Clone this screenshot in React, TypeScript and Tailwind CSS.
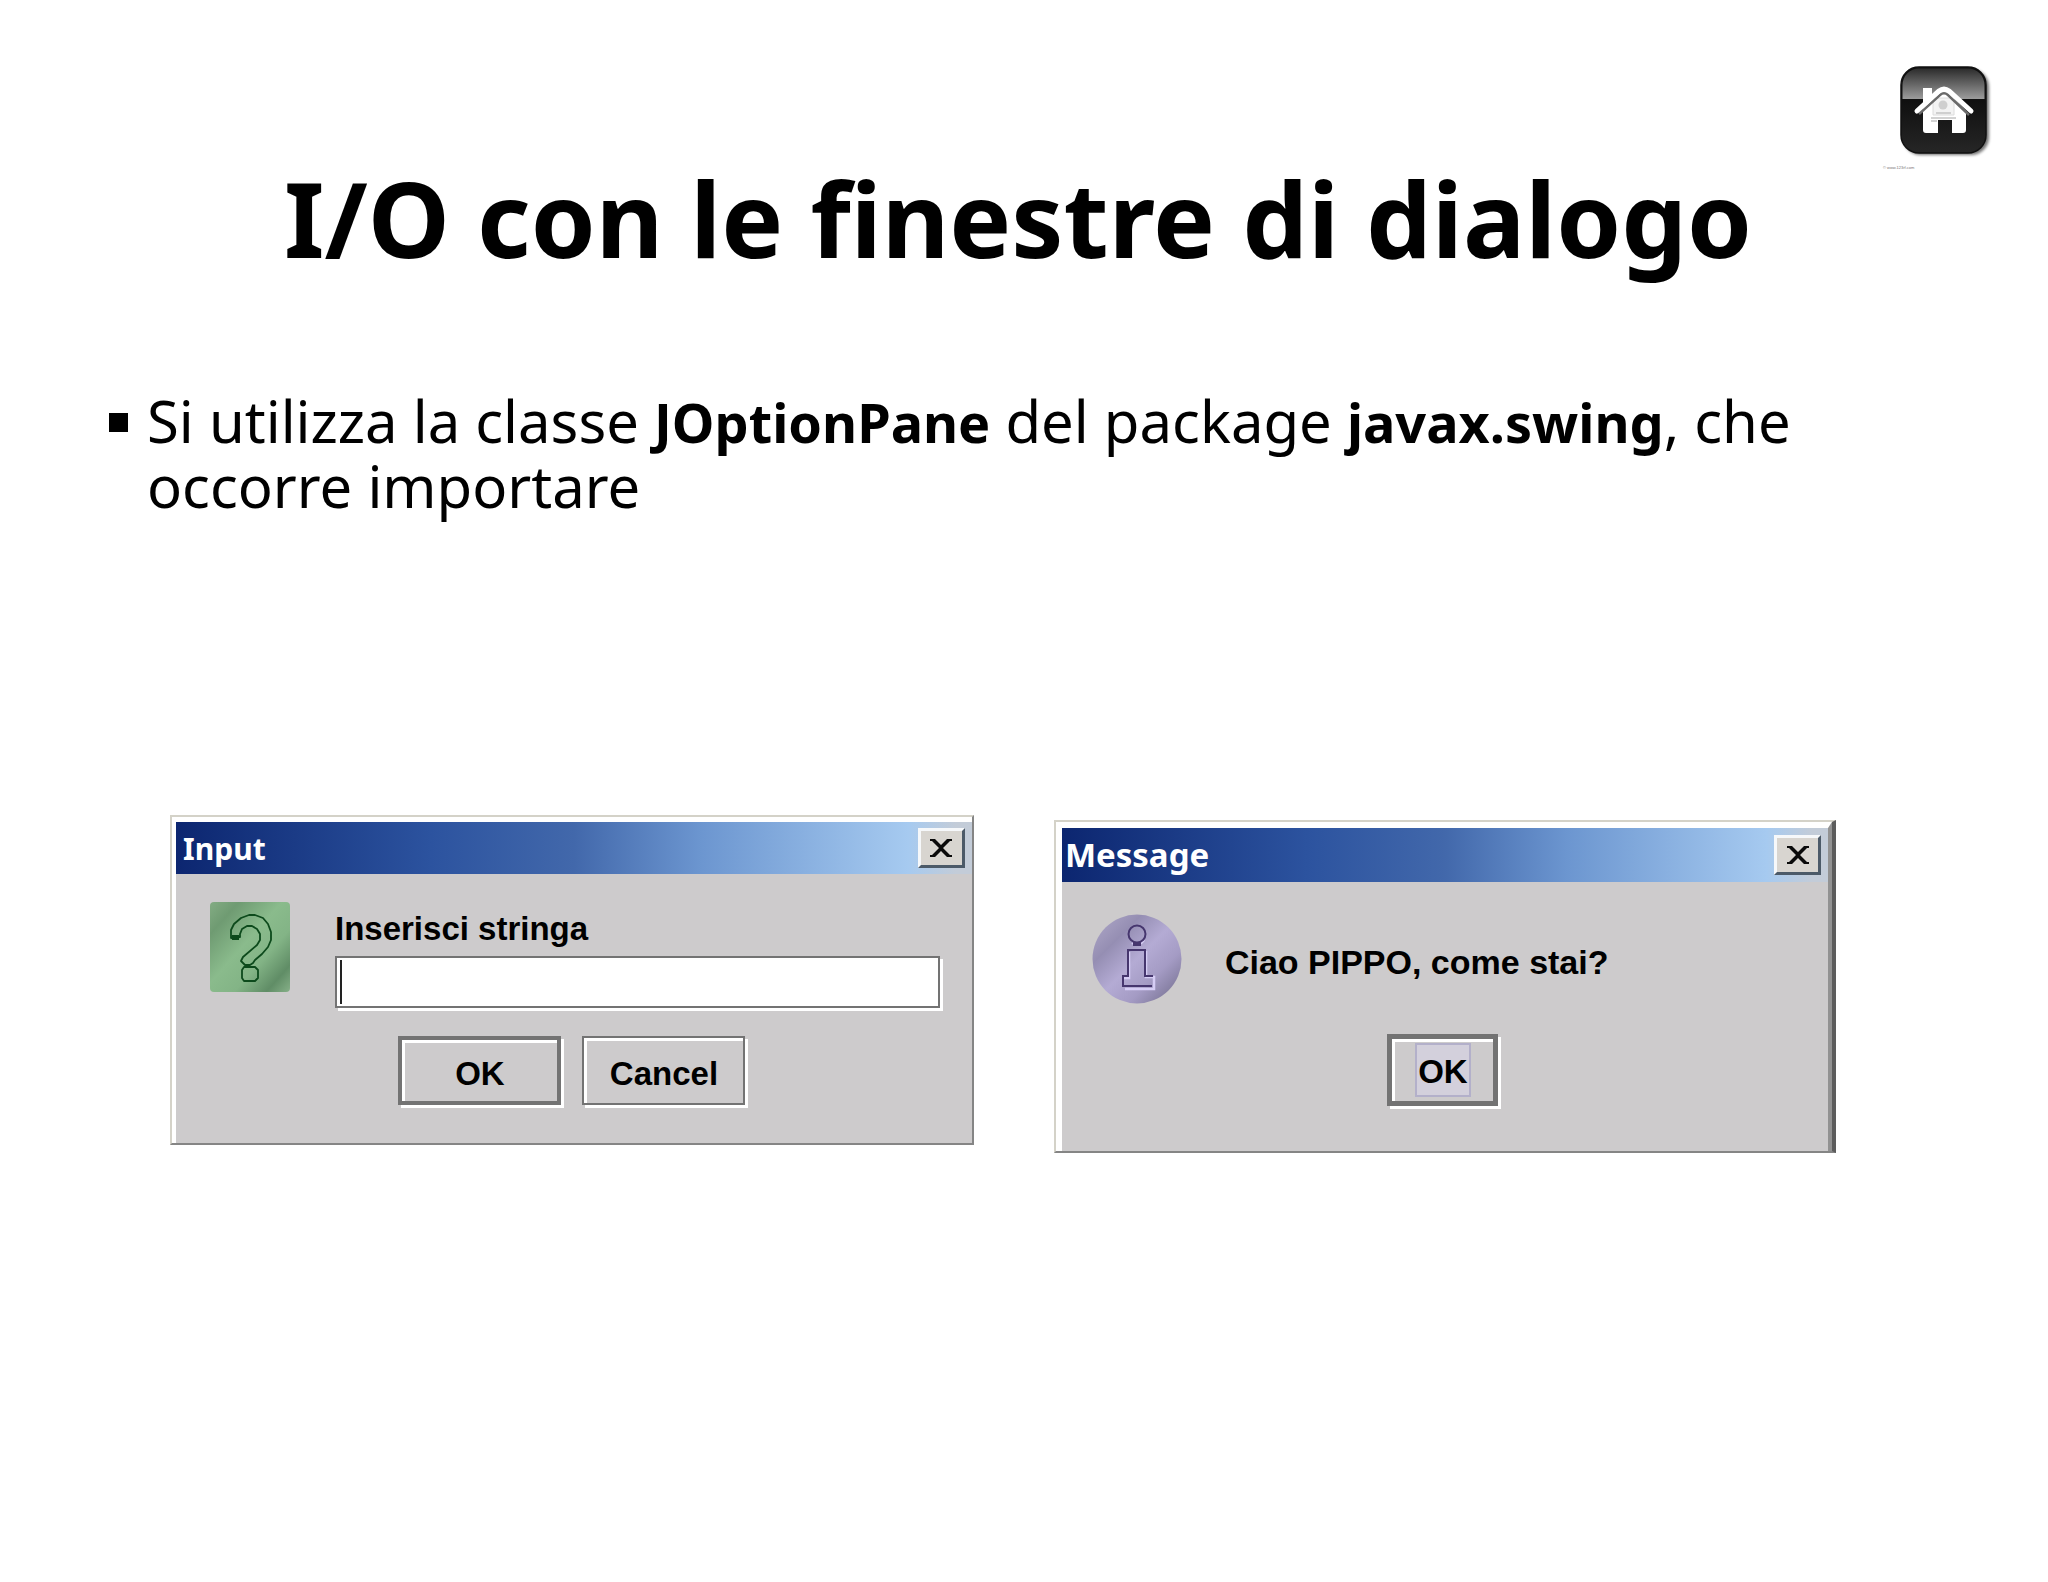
import { ReactNode } from 'react'

function HomeIcon() {
  return (
    <svg viewBox="0 0 100 98" className="w-[100px] h-[98px]" aria-hidden="true">
      <defs>
        <linearGradient id="gloss" x1="0" y1="0" x2="0" y2="1">
          <stop offset="0" stopColor="#2c2c2c" />
          <stop offset="1" stopColor="#9c9c9c" />
        </linearGradient>
        <linearGradient id="base" x1="0" y1="0" x2="0" y2="1">
          <stop offset="0.4" stopColor="#101010" />
          <stop offset="1" stopColor="#262626" />
        </linearGradient>
        <filter id="shade" x="-20%" y="-20%" width="140%" height="140%">
          <feGaussianBlur stdDeviation="1.4" />
        </filter>
      </defs>
      <rect x="8" y="7" width="86" height="86" rx="18" fill="#000" opacity="0.55" filter="url(#shade)" />
      <rect x="6" y="5" width="85" height="86" rx="18" fill="url(#base)" stroke="#111" strokeWidth="1.5" />
      <path d="M7.500 37V23A16.500 16.500 0 0 1 24 6.500H73A16.500 16.500 0 0 1 89.500 23V37Z" fill="url(#gloss)" />
      <path d="M28 26h9v10l12-9 22 22v19q0 3-3 3H57V58H43v13H31q-3 0-3-3Z" fill="#fff" />
      <path d="M38 36h21v17H38Z" fill="#f3f3f3" stroke="#dcdcdc" />
      <circle cx="48" cy="43" r="4.500" fill="#cfcfcf" />
      <path d="M36 56h25M36 59h6M41 51h15" stroke="#c4c4c4" strokeWidth="1.500" />
      <path d="M24 52 45 33q4-3.500 8 0L74 53" fill="none" stroke="#6a6a6a" strokeWidth="2.500" />
      <path d="M22 49 44 29q5-4 10 0L76 49" fill="none" stroke="#fff" strokeWidth="5" strokeLinecap="round" />
    </svg>
  )
}

function QuestionIcon() {
  return (
    <svg viewBox="0 0 80 90" className="w-20 h-[90px] shrink-0" aria-hidden="true">
      <defs>
        <linearGradient id="green" x1="0" y1="0" x2="1" y2="1">
          <stop offset="0" stopColor="#83ac83" />
          <stop offset="0.18" stopColor="#6f9b72" />
          <stop offset="0.45" stopColor="#8abb8c" />
          <stop offset="0.65" stopColor="#83b486" />
          <stop offset="0.85" stopColor="#608d66" />
          <stop offset="1" stopColor="#86b088" />
        </linearGradient>
      </defs>
      <rect width="80" height="90" rx="4" fill="url(#green)" />
      <g fill="none" stroke="#0d4a1c" strokeWidth="1.800" strokeLinejoin="round">
        <path d="M21 36V28l3-6 7-6 8-3h6l8 3 5 6 3 8v8l-3 7-6 7-7 6-2 3-3 2h-5l-4-4 2-4 14-12 3-5v-6l-3-5-5-3h-5l-5 3-2 5v3Z" />
        <path d="M34 65h11l3 3v8l-3 3H34l-2-3v-8Z" />
      </g>
      <path d="M22 33h7v5h-7Z" fill="#0d4a1c" />
    </svg>
  )
}

function InfoIcon() {
  return (
    <svg viewBox="0 0 90 90" className="w-[90px] h-[90px] shrink-0" aria-hidden="true">
      <defs>
        <linearGradient id="violet" x1="0.1" y1="0.1" x2="0.9" y2="0.9">
          <stop offset="0" stopColor="#a8a1c2" />
          <stop offset="0.22" stopColor="#958eb3" />
          <stop offset="0.5" stopColor="#b4abd4" />
          <stop offset="0.75" stopColor="#a49bc4" />
          <stop offset="1" stopColor="#7e789a" />
        </linearGradient>
      </defs>
      <circle cx="45" cy="45" r="44.500" fill="url(#violet)" />
      <path d="M54 37v26h8v12H33M32 64h5V38M40 29a9 9 0 0 0 12-3" fill="none" stroke="#d6cdf5" strokeWidth="2.500" />
      <g fill="none" stroke="#46366e" strokeWidth="2">
        <circle cx="45" cy="20" r="8.500" />
        <path d="M54 36H36v26h-5v10h29M53 37v25h8" />
      </g>
      <path d="M41 28h8v4h-8Z" fill="#46366e" />
    </svg>
  )
}

interface TitleBarProps {
  id: string
  title: string
  className: string
}

function TitleBar({ id, title, className }: TitleBarProps) {
  return (
    <div
      className={`flex items-center justify-between pr-[7px] bg-[linear-gradient(to_right,#0c2670_0%,#2c539f_32%,#4268ab_50%,#6c96d0_66%,#a6caf0_92%,#c3ccd8_98%)] font-['Noto_Sans',sans-serif] font-bold text-white ${className}`}
    >
      <h2 id={id}>{title}</h2>
      <button
        type="button"
        aria-label="Chiudi"
        className="flex items-center justify-center w-[47px] h-10 bg-[#d8d5d0] border-[3px] border-t-[#f6f8fa] border-l-[#f6f8fa] border-r-[#4c5a68] border-b-[#4c5a68]"
      >
        <svg viewBox="0 0 24 20" className="w-6 h-5" aria-hidden="true">
          <path d="M1 1h5l6 6 6-6h5v2h-2l-7 7 7 7h2v2h-5l-6-6-6 6H1v-2h2l7-7-7-7H1Z" fill="#0a0a0a" />
        </svg>
      </button>
    </div>
  )
}

interface MetalButtonProps {
  children: ReactNode
  className: string
}

function MetalButton({ children, className }: MetalButtonProps) {
  return (
    <button
      type="button"
      className={`flex items-center justify-center border-[#737373] shadow-[inset_3px_3px_0_#fff,3px_3px_0_#fff] font-bold text-[33px] leading-10 ${className}`}
    >
      {children}
    </button>
  )
}

function InputDialog() {
  return (
    <section
      aria-labelledby="input-title"
      className="flex-[805_1_0%] border-2 border-t-[#d4d2c8] border-l-[#d4d2c8] border-r-[#858585] border-b-[#858585]"
    >
      <div className="border-t-[5px] border-l-4 border-white">
        <TitleBar id="input-title" title="Input" className="h-[52px] pl-[7px] text-[30px]" />
        <form className="bg-[#cdcbcc] pt-7 pb-[38px]" onSubmit={(e) => e.preventDefault()}>
          <div className="flex gap-[45px] pl-[34px] pr-8">
            <QuestionIcon />
            <div className="flex flex-col grow pt-[7px]">
              <label htmlFor="stringa" className="font-bold text-[33px] leading-10">
                Inserisci stringa
              </label>
              <div className="relative mt-[7px]">
                <input
                  id="stringa"
                  type="text"
                  className="block w-full h-[52px] px-2 bg-white border-2 border-[#737373] shadow-[3px_3px_0_#fff] text-[33px] outline-none"
                />
                {/* cursore */}
                <span className="absolute left-[5px] top-1 bottom-1 w-[2px] bg-[#222]" />
              </div>
            </div>
          </div>
          <div className="flex justify-center gap-[21px] mt-7 pr-1">
            <MetalButton className="w-[163px] h-[69px] border-4 pt-1.5">OK</MetalButton>
            <MetalButton className="w-[163px] h-[69px] border-2 pt-1.5">Cancel</MetalButton>
          </div>
        </form>
      </div>
    </section>
  )
}

function MessageDialog() {
  return (
    <section
      aria-labelledby="message-title"
      className="flex-[781_1_0%] mt-[5px] border-2 border-r-4 border-t-[#d4d2c8] border-l-[#d4d2c8] border-r-[#5c5c5c] border-b-[#858585]"
    >
      <div className="border-t-[6px] border-l-[6px] border-r-4 border-white border-r-[#929292]">
        <TitleBar id="message-title" title="Message" className="h-[54px] pl-[3px] text-[33px]" />
        <div className="bg-[#cdcbcc] pt-8 pb-[45px]">
          <div className="flex gap-[43px] pl-[30px]">
            <InfoIcon />
            <p className="pt-7 font-bold text-[34px] leading-10">Ciao PIPPO, come stai?</p>
          </div>
          <div className="flex justify-center mt-[30px] pr-1">
            <MetalButton className="w-[111px] h-[72px] border-[5px]">
              <span className="flex items-center justify-center w-14 h-[54px] pt-1 bg-[#d3d0dc] border-2 border-[#b3b0ca]">
                OK
              </span>
            </MetalButton>
          </div>
        </div>
      </div>
    </section>
  )
}

export default function App() {
  return (
    <main className="min-h-screen bg-white text-black font-['Liberation_Sans',Arial,sans-serif]">
      <header className="flex justify-end pt-[62px] pr-[53px]">
        <a href="#" aria-label="Home" className="flex flex-col w-[112px]">
          <span className="self-end">
            <HomeIcon />
          </span>
          <span className="mt-1 text-[4px] leading-2 text-[#777]">© www.123rf.com</span>
        </a>
      </header>
      <h1 className="pr-3 text-center font-['Noto_Sans',sans-serif] font-bold text-[104px] leading-[92px]">
        I/O con le finestre di dialogo
      </h1>
      <ul className="mt-[125px] pl-[109px] pr-[212px] font-['Noto_Sans',sans-serif] text-[58px] leading-16">
        <li className="flex gap-[19px]">
          <span className="w-[19px] h-[19px] mt-6 shrink-0 bg-black" />
          <p>
            Si utilizza la classe <b className="text-[54px]">JOptionPane</b> del package{' '}
            <b className="text-[54px]">javax.swing</b>, che occorre importare
          </p>
        </li>
      </ul>
      <div className="flex items-start gap-20 mt-[297px] pl-[170px] pr-[212px]">
        <InputDialog />
        <MessageDialog />
      </div>
    </main>
  )
}
